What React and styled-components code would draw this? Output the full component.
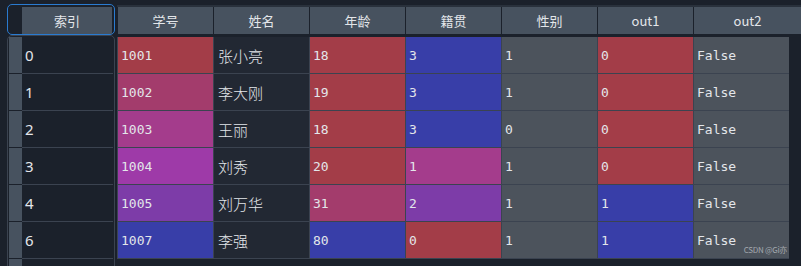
import React from 'react';
import styled, { createGlobalStyle } from 'styled-components';

const GlobalStyle = createGlobalStyle`
  html, body {
    margin: 0;
    padding: 0;
    background: #1b212b;
  }
`;

const COLORS = {
  red: '#a33d48',
  pink: '#a33c6c',
  rose: '#a43c8c',
  magenta: '#9e3aa8',
  purple: '#7d3ca8',
  blue: '#383ea8',
  gray: '#4c535c',
  dark: '#222833',
};

const columns = ['学号', '姓名', '年龄', '籍贯', '性别', 'out1', 'out2'];

const rows = [
  { index: '0', cells: [['1001', 'red'], ['张小亮', 'dark', true], ['18', 'red'], ['3', 'blue'], ['1', 'gray'], ['0', 'red'], ['False', 'gray']] },
  { index: '1', cells: [['1002', 'pink'], ['李大刚', 'dark', true], ['19', 'red'], ['3', 'blue'], ['1', 'gray'], ['0', 'red'], ['False', 'gray']] },
  { index: '2', cells: [['1003', 'rose'], ['王丽', 'dark', true], ['18', 'red'], ['3', 'blue'], ['0', 'gray'], ['0', 'red'], ['False', 'gray']] },
  { index: '3', cells: [['1004', 'magenta'], ['刘秀', 'dark', true], ['20', 'red'], ['1', 'rose'], ['1', 'gray'], ['0', 'red'], ['False', 'gray']] },
  { index: '4', cells: [['1005', 'purple'], ['刘万华', 'dark', true], ['31', 'pink'], ['2', 'purple'], ['1', 'gray'], ['1', 'blue'], ['False', 'gray']] },
  { index: '6', cells: [['1007', 'blue'], ['李强', 'dark', true], ['80', 'blue'], ['0', 'red'], ['1', 'gray'], ['1', 'blue'], ['False', 'gray']] },
];

const Screen = styled.div`
  position: relative;
  display: flex;
  height: 266px;
  overflow: hidden;
  padding: 4px 0 0 7px;
  box-sizing: border-box;
  background: #1b212b;
  color: #dde1e6;
`;

const IndexPanel = styled.div`
  width: 108px;
  display: flex;
  flex-direction: column;
  flex-shrink: 0;
`;

const IndexHead = styled.div`
  height: 31px;
  box-sizing: border-box;
  border: 1px solid #2a7bd0;
  border-radius: 5px;
  padding: 2px 2px 0 14px;
  display: flex;
`;

const HeadCell = styled.div`
  flex: ${p => (p.$grow ? 1 : 'none')};
  width: ${p => (p.$grow ? 'auto' : '95px')};
  height: 27px;
  background: #47525f;
  border-right: ${p => (p.$grow ? 'none' : '1px solid #1b212b')};
  display: flex;
  align-items: center;
  justify-content: center;
  font-family: "Noto Sans CJK SC", "Noto Sans", sans-serif;
  font-size: 13px;
  color: #e3e6ea;
`;

const IndexBody = styled.div`
  flex: 1;
  box-sizing: border-box;
  border: 1px solid #3b4350;
  border-radius: 5px;
  padding: 1px 1px 0 1px;
`;

const IndexRow = styled.div`
  display: flex;
  height: 37px;
`;

const Strip = styled.div`
  width: 13px;
  height: 36px;
  background: #47525f;
`;

const IndexCell = styled.div`
  flex: 1;
  height: 36px;
  border-bottom: 1px solid #3b4350;
  background: #1b212b;
  display: flex;
  align-items: center;
  padding-left: 3px;
  font-family: "Noto Sans", "Open Sans", sans-serif;
  font-size: 15px;
  color: #e4e7eb;
`;

const TablePanel = styled.div`
  flex: 1;
  margin-left: 2px;
  display: flex;
  flex-direction: column;
`;

const HeaderRow = styled.div`
  display: flex;
  border-top: 2px solid #29313c;
  margin-top: 1px;
  margin-bottom: 3px;
  padding-left: 1px;
  background: #1b212b;
`;

const Grid = styled.div`
  display: grid;
  grid-template-columns: repeat(7, 95px);
  grid-auto-rows: 36px;
  gap: 1px;
  width: max-content;
  padding: 0 0 1px 1px;
  background: #3b4350;
`;

const Cell = styled.div`
  background: ${p => COLORS[p.$tone]};
  display: flex;
  align-items: center;
  padding-left: ${p => (p.$text ? '4px' : '3px')};
  font-family: ${p => (p.$text
    ? '"Noto Sans CJK SC", "Noto Sans", sans-serif'
    : '"DejaVu Sans Mono", "Liberation Mono", monospace')};
  font-size: ${p => (p.$text ? '15px' : '13px')};
  font-weight: ${p => (p.$text ? 300 : 400)};
  color: #e3e6ea;
`;

const Watermark = styled.span`
  position: absolute;
  right: 14px;
  bottom: 11px;
  font-family: "Noto Sans CJK SC", "Noto Sans", sans-serif;
  font-size: 8px;
  color: #a3a8ae;
  letter-spacing: -0.3px;
`;

const App = () => (
  <>
    <GlobalStyle />
    <Screen>
      <IndexPanel>
        <IndexHead>
          <HeadCell $grow>索引</HeadCell>
        </IndexHead>
        <IndexBody>
          {rows.map(r => (
            <IndexRow key={r.index}>
              <Strip />
              <IndexCell>{r.index}</IndexCell>
            </IndexRow>
          ))}
          <IndexRow>
            <Strip />
            <IndexCell />
          </IndexRow>
        </IndexBody>
      </IndexPanel>

      <TablePanel>
        <HeaderRow>
          {columns.map((c, i) => (
            <HeadCell key={c} $grow={i === columns.length - 1}>{c}</HeadCell>
          ))}
        </HeaderRow>
        <Grid>
          {rows.map(r =>
            r.cells.map(([value, tone, text], i) => (
              <Cell key={r.index + '-' + i} $tone={tone} $text={text}>{value}</Cell>
            ))
          )}
        </Grid>
      </TablePanel>
      <Watermark>CSDN @Gi亦</Watermark>
    </Screen>
  </>
);

export default App;
